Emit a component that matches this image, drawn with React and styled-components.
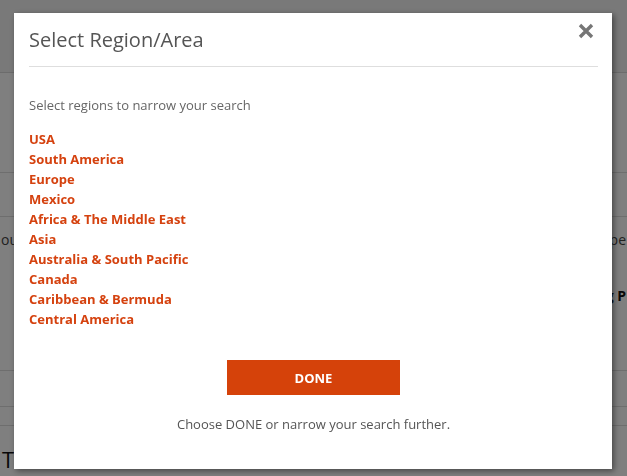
import styled, { createGlobalStyle } from "styled-components"

const regions = [
    "USA",
    "South America",
    "Europe",
    "Mexico",
    "Africa & The Middle East",
    "Asia",
    "Australia & South Pacific",
    "Canada",
    "Caribbean & Bermuda",
    "Central America",
]

const GlobalStyle = createGlobalStyle`
html, body {
    margin:0;
    padding:0;
    width:627px;
    height:476px;
    overflow:hidden;
    font-family:"Open Sans", "Liberation Sans", sans-serif;
}
`

const App = () => {
    return (
        <>
            <GlobalStyle />
            <Page>
                <Header />
                <Row height={99} />
                <Row height={43} />
                <Block height={154}>
                    <Line>
                        <Faint>ou</Faint>
                        <Faint>pe</Faint>
                    </Line>
                    <Line>
                        <span />
                        <Strong>g P</Strong>
                    </Line>
                </Block>
                <Row height={35} />
                <Row height={18} />
                <BigText>T</BigText>
            </Page>
            <Overlay>
                <Modal>
                    <Close aria-label="close">
                        <svg width="16" height="16" viewBox="0 0 16 16">
                            <path d="M2 2 L14 14 M14 2 L2 14" stroke="#767676" strokeWidth="3.4" strokeLinecap="butt" />
                        </svg>
                    </Close>
                    <Title>Select Region/Area</Title>
                    <Divider />
                    <Intro>Select regions to narrow your search</Intro>
                    <List>
                        {regions.map((region, index) => {
                            return <Li key={index}><RegionLink href="#">{region}</RegionLink></Li>
                        })}
                    </List>
                    <Footer>
                        <DoneButton>DONE</DoneButton>
                        <Hint>Choose DONE or narrow your search further.</Hint>
                    </Footer>
                </Modal>
            </Overlay>
        </>
    )
}

const Page = styled.div`
width:627px;
height:476px;
background:#fff;
display:flex;
flex-direction:column;
`

const Header = styled.div`
height:72px;
background:#f2f2f2;
border-bottom:1px solid #d8d8d8;
flex-shrink:0;
`

const Row = styled.div`
height:${props => props.height}px;
border-bottom:1px solid #dcdcdc;
flex-shrink:0;
`

const Block = styled(Row)`
display:flex;
flex-direction:column;
gap:38px;
padding-top:14px;
box-sizing:border-box;
`

const Line = styled.div`
display:flex;
justify-content:space-between;
padding:0 1px;
`

const Faint = styled.span`
font-size:14px;
line-height:18px;
color:#444;
`

const Strong = styled.span`
font-size:14px;
line-height:18px;
font-weight:700;
color:#111;
`

const BigText = styled.div`
font-size:22px;
line-height:26px;
color:#111;
padding:20px 2px 0;
`

const Overlay = styled.div`
position:fixed;
inset:0;
background:rgba(0,0,0,0.5);
padding:13px 15px 7px 14px;
`

const Modal = styled.div`
position:relative;
width:598px;
height:456px;
box-sizing:border-box;
background:#fff;
box-shadow:2px 2px 6px rgba(0,0,0,0.45);
padding:0 14px 0 15px;
display:flex;
flex-direction:column;
`

const Close = styled.button`
position:absolute;
top:10px;
right:18px;
width:16px;
height:16px;
padding:0;
border:none;
background:none;
display:flex;
`

const Title = styled.h2`
margin:0;
padding-top:14px;
font-size:20px;
line-height:26px;
font-weight:500;
color:#555;
`

const Divider = styled.hr`
margin:13px 0 0;
border:none;
border-top:1px solid #dedede;
`

const Intro = styled.p`
margin:29px 0 0;
font-size:13px;
line-height:18px;
color:#666;
`

const List = styled.ul`
list-style:none;
margin:14px 0 0;
padding:0;
display:flex;
flex-direction:column;
`

const Li = styled.li`
height:20px;
line-height:20px;
`

const RegionLink = styled.a`
font-size:13px;
font-weight:700;
color:#d5420f;
text-decoration:none;
`

const Footer = styled.div`
display:flex;
flex-direction:column;
align-items:center;
margin-top:32px;
`

const DoneButton = styled.button`
width:173px;
height:35px;
border:none;
background:#d5420a;
color:#fff;
font-family:inherit;
font-size:13px;
font-weight:700;
`

const Hint = styled.p`
margin:20px 0 0;
font-size:13px;
line-height:18px;
color:#555;
`

export default App
